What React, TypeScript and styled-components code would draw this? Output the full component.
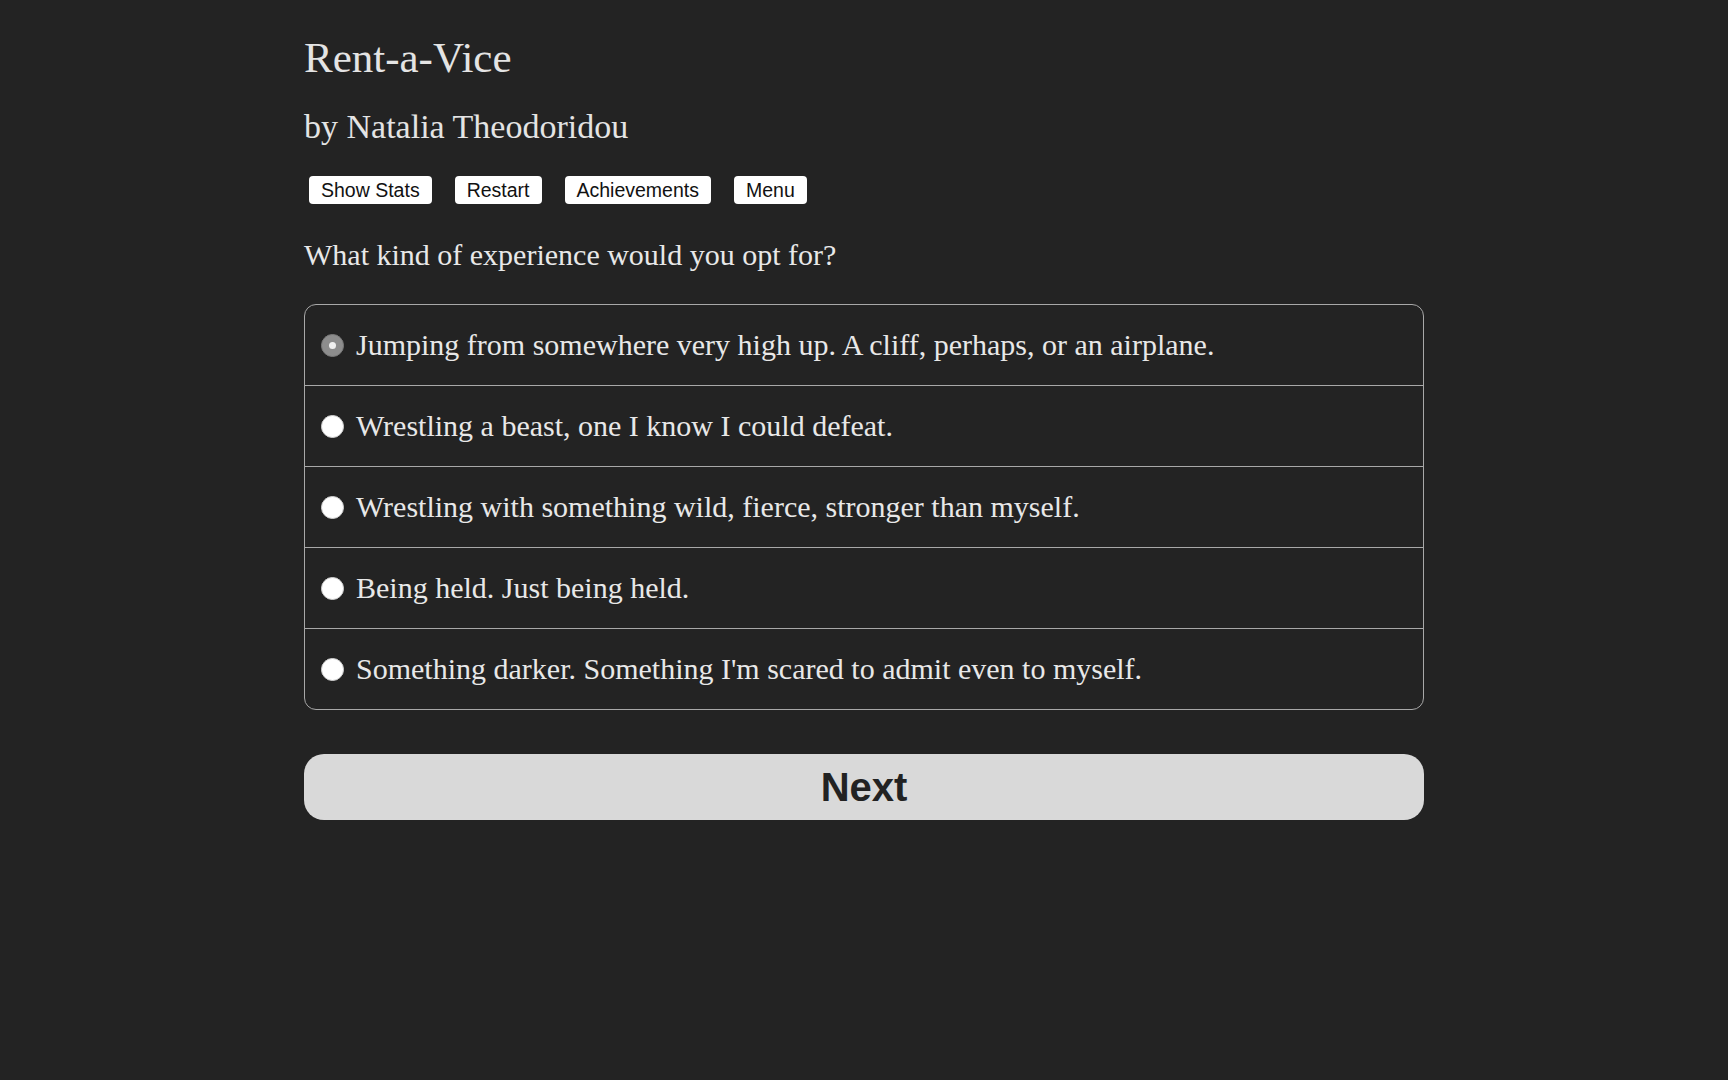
import React, { useState } from "react";
import styled, { createGlobalStyle } from "styled-components";

const Global = createGlobalStyle`
  html, body { margin: 0; padding: 0; background: #232323; }
  body { font-family: "Liberation Serif", "Times New Roman", serif; color: #e8e8e8; }
`;

const Page = styled.div`
  width: 1120px;
  margin: 0 auto;
  padding-top: 32px;
`;

const Title = styled.h1`
  margin: 0;
  font-size: 43px;
  font-weight: normal;
  line-height: 52px;
  color: #e4e4e4;
`;

const Author = styled.h2`
  margin: 23px 0 0;
  font-size: 34px;
  font-weight: normal;
  line-height: 40px;
  color: #e4e4e4;
`;

const Toolbar = styled.div`
  display: flex;
  gap: 23px;
  margin: 29px 0 0 5px;
`;

const ToolButton = styled.button`
  font-family: "Liberation Sans", Arial, sans-serif;
  font-size: 19.5px;
  height: 28px;
  padding: 0 12px;
  background: #fff;
  color: #111;
  border: none;
  border-radius: 4px;
  cursor: pointer;
`;

const Question = styled.p`
  margin: 33px 0 0;
  font-size: 30px;
  line-height: 36px;
`;

const Options = styled.div`
  margin-top: 31px;
  border: 1px solid #a8a8a8;
  border-radius: 12px;
  overflow: hidden;
`;

const Row = styled.label<{ $first?: boolean }>`
  display: flex;
  align-items: center;
  height: 80px;
  padding-left: 16px;
  gap: 12px;
  border-top: ${(p) => (p.$first ? "none" : "1px solid #a8a8a8")};
  font-size: 30px;
  cursor: pointer;
`;

const Radio = styled.span<{ $checked?: boolean }>`
  flex: none;
  width: 23px;
  height: 23px;
  border-radius: 50%;
  box-sizing: border-box;
  background: ${(p) => (p.$checked ? "#8d8d8d" : "#ffffff")};
  border: 1px solid ${(p) => (p.$checked ? "#7a7a7a" : "#d0d0d0")};
  display: flex;
  align-items: center;
  justify-content: center;
  &::after {
    content: "";
    display: ${(p) => (p.$checked ? "block" : "none")};
    width: 7px;
    height: 7px;
    border-radius: 50%;
    background: #f0f0f0;
  }
`;

const NextButton = styled.button`
  display: block;
  width: 100%;
  margin-top: 44px;
  height: 66px;
  border: none;
  border-radius: 20px;
  background: #d9d9d9;
  color: #222;
  font-family: "Liberation Sans", Arial, sans-serif;
  font-weight: bold;
  font-size: 40px;
  cursor: pointer;
`;

const options = [
  "Jumping from somewhere very high up. A cliff, perhaps, or an airplane.",
  "Wrestling a beast, one I know I could defeat.",
  "Wrestling with something wild, fierce, stronger than myself.",
  "Being held. Just being held.",
  "Something darker. Something I'm scared to admit even to myself.",
];

export default function App() {
  const [sel, setSel] = useState(0);
  return (
    <Page>
      <Global />
      <Title>Rent-a-Vice</Title>
      <Author>by Natalia Theodoridou</Author>
      <Toolbar>
        <ToolButton>Show Stats</ToolButton>
        <ToolButton>Restart</ToolButton>
        <ToolButton>Achievements</ToolButton>
        <ToolButton>Menu</ToolButton>
      </Toolbar>
      <Question>What kind of experience would you opt for?</Question>
      <Options>
        {options.map((o, i) => (
          <Row key={i} $first={i === 0} onClick={() => setSel(i)}>
            <Radio $checked={sel === i} />
            {o}
          </Row>
        ))}
      </Options>
      <NextButton>Next</NextButton>
    </Page>
  );
}
